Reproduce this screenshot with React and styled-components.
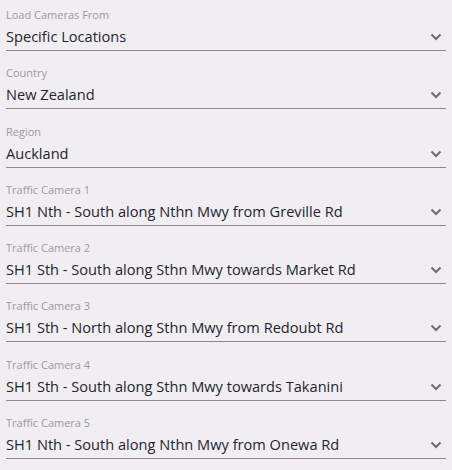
import React from 'react';
import styled, { createGlobalStyle } from 'styled-components';

const GlobalStyle = createGlobalStyle`
  body {
    margin: 0;
    background: #f0eef1;
    font-family: "Open Sans", "Noto Sans", sans-serif;
  }
`;

const Page = styled.div`
  padding: 0 6px;
  display: flex;
  flex-direction: column;
  gap: 7.3px;
`;

const Field = styled.div`
  padding: 8px 0 3px;
  border-bottom: 1px solid #8b8a8d;
  display: flex;
  flex-direction: column;
  gap: 3px;
`;

const Label = styled.div`
  font-size: 11px;
  line-height: 14px;
  color: #9c9a9e;
`;

const Row = styled.div`
  display: flex;
  align-items: center;
  justify-content: space-between;
`;

const Value = styled.div`
  font-size: 14.6px;
  line-height: 22px;
  color: #1f2530;
`;

const Chevron = styled.svg`
  width: 12px;
  height: 8px;
  margin-right: 4px;
  margin-top: 2px;
`;

const fields = [
  ['Load Cameras From', 'Specific Locations'],
  ['Country', 'New Zealand'],
  ['Region', 'Auckland'],
  ['Traffic Camera 1', 'SH1 Nth - South along Nthn Mwy from Greville Rd'],
  ['Traffic Camera 2', 'SH1 Sth - South along Sthn Mwy towards Market Rd'],
  ['Traffic Camera 3', 'SH1 Sth - North along Sthn Mwy from Redoubt Rd'],
  ['Traffic Camera 4', 'SH1 Sth - South along Sthn Mwy towards Takanini'],
  ['Traffic Camera 5', 'SH1 Nth - South along Nthn Mwy from Onewa Rd'],
];

export default function App() {
  return (
    <>
      <GlobalStyle />
      <Page>
        {fields.map(([label, value]) => (
          <Field key={label}>
            <Label>{label}</Label>
            <Row>
              <Value>{value}</Value>
              <Chevron viewBox="0 0 12 8">
                <path d="M1.5 1.5 L6 6 L10.5 1.5" fill="none" stroke="#6e6c70" strokeWidth="2" />
              </Chevron>
            </Row>
          </Field>
        ))}
      </Page>
    </>
  );
}
